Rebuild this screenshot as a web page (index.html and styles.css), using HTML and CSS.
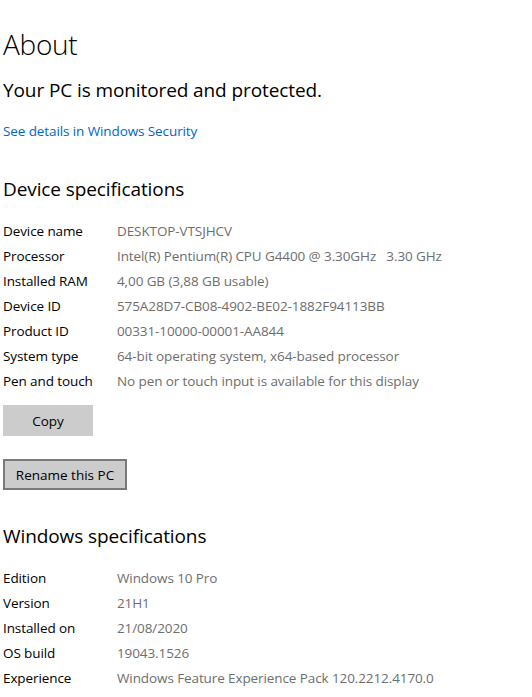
FILE: index.html
```html
<!DOCTYPE html>
<html>
<head>
<meta charset="utf-8">
<link rel="stylesheet" href="styles.css">
</head>
<body>
<div class="page">
  <h1 class="title">About</h1>
  <p class="status">Your PC is monitored and protected.</p>
  <a class="link" href="#">See details in Windows Security</a>

  <h2 class="section">Device specifications</h2>
  <div class="specs">
    <div class="label">Device name</div><div class="value">DESKTOP-VTSJHCV</div>
    <div class="label">Processor</div><div class="value">Intel(R) Pentium(R) CPU G4400 @ 3.30GHz &nbsp; 3.30 GHz</div>
    <div class="label">Installed RAM</div><div class="value">4,00 GB (3,88 GB usable)</div>
    <div class="label">Device ID</div><div class="value">575A28D7-CB08-4902-BE02-1882F94113BB</div>
    <div class="label">Product ID</div><div class="value">00331-10000-00001-AA844</div>
    <div class="label">System type</div><div class="value">64-bit operating system, x64-based processor</div>
    <div class="label">Pen and touch</div><div class="value">No pen or touch input is available for this display</div>
  </div>
  <div class="buttons">
    <button class="btn copy">Copy</button>
    <button class="btn rename">Rename this PC</button>
  </div>

  <h2 class="section windows">Windows specifications</h2>
  <div class="specs">
    <div class="label">Edition</div><div class="value">Windows 10 Pro</div>
    <div class="label">Version</div><div class="value">21H1</div>
    <div class="label">Installed on</div><div class="value">21/08/2020</div>
    <div class="label">OS build</div><div class="value">19043.1526</div>
    <div class="label">Experience</div><div class="value">Windows Feature Experience Pack 120.2212.4170.0</div>
  </div>
</div>
</body>
</html>
```
FILE: styles.css
```css
html, body {
  margin: 0;
  padding: 0;
  background: #ffffff;
}
body {
  font-family: "Open Sans", "Noto Sans", sans-serif;
  color: #000;
  overflow: hidden;
}
.page {
  padding: 24px 0 0 3px;
}
.title {
  margin: 0;
  font-size: 28px;
  font-weight: 300;
  line-height: 40px;
  letter-spacing: -0.3px;
}
.status {
  margin: 12px 0 0 0;
  font-size: 19px;
  line-height: 28px;
  letter-spacing: -0.1px;
}
.link {
  display: block;
  margin-top: 17px;
  font-size: 13.5px;
  line-height: 20px;
  color: #0067c0;
  text-decoration: none;
  letter-spacing: -0.1px;
}
.section {
  margin: 34px 0 0 0;
  font-size: 19px;
  font-weight: 400;
  line-height: 28px;
  letter-spacing: -0.1px;
}
.section.windows {
  margin-top: 32px;
}
.specs {
  display: grid;
  grid-template-columns: 114px auto;
  grid-auto-rows: 25px;
  margin-top: 16px;
  font-size: 13.5px;
  letter-spacing: -0.1px;
}
.label, .value {
  line-height: 25px;
  white-space: nowrap;
}
.value {
  color: #6e6e6e;
}
.buttons {
  display: flex;
  flex-direction: column;
  align-items: flex-start;
  gap: 23px;
  margin-top: 11px;
}
.btn {
  font-family: inherit;
  font-size: 13.5px;
  color: #000;
  background: #cccccc;
  margin: 0;
  height: 31px;
  padding: 0;
}
.copy {
  width: 90px;
  border: none;
}
.rename {
  width: 124px;
  border: 2px solid #7a7a7a;
}
```
